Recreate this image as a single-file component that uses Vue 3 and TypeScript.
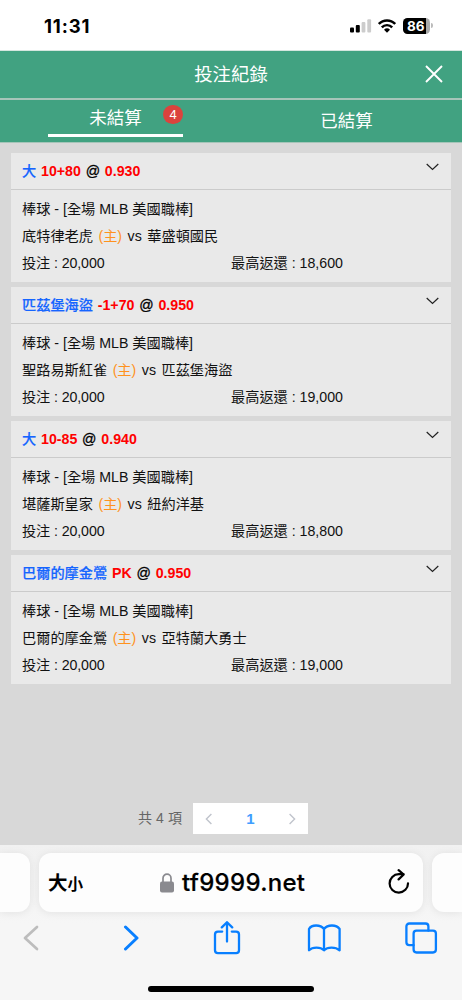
<script setup lang="ts">
import { ref } from 'vue'

interface Bet {
  pick: string
  line: string
  odds: string
  home: string
  away: string
  payout: string
}

const bets: Bet[] = [
  { pick: '大', line: '10+80', odds: '0.930', home: '底特律老虎', away: '華盛頓國民', payout: '18,600' },
  { pick: '匹茲堡海盜', line: '-1+70', odds: '0.950', home: '聖路易斯紅雀', away: '匹茲堡海盜', payout: '19,000' },
  { pick: '大', line: '10-85', odds: '0.940', home: '堪薩斯皇家', away: '紐約洋基', payout: '18,800' },
  { pick: '巴爾的摩金鶯', line: 'PK', odds: '0.950', home: '巴爾的摩金鶯', away: '亞特蘭大勇士', payout: '19,000' },
]
const activeTab = ref<number>(0)
</script>

<template>
  <div class="phone">
    <div class="status">
      <span class="clock">11:31</span>
      <div class="indicators">
        <svg class="signal" width="22" height="14" viewBox="0 0 22 14">
          <rect x="0" y="8.6" width="4" height="5" rx="1" fill="#000" />
          <rect x="5.8" y="6" width="4" height="7.6" rx="1" fill="#000" />
          <rect x="11.6" y="3" width="3.8" height="10.6" rx="1" fill="#ccc" />
          <rect x="17.3" y="0.3" width="3.8" height="13.3" rx="1" fill="#ccc" />
        </svg>
        <svg class="wifi" width="18" height="14" viewBox="0 0 18 14">
          <path d="M0.8 5A11.3 11.3 0 0 1 17.2 5" fill="none" stroke="#000" stroke-width="2.5" />
          <path d="M3.8 8.4A7 7 0 0 1 14.2 8.4" fill="none" stroke="#000" stroke-width="2.4" />
          <path d="M6 10.7A4.3 4.3 0 0 1 12 10.7L9 13.7Z" fill="#000" />
        </svg>
        <div class="battery"><span>86</span></div>
        <i class="battery-cap"></i>
      </div>
    </div>

    <header class="title-bar">
      <h1>投注紀錄</h1>
      <svg class="close" width="18" height="18" viewBox="0 0 18 18">
        <path d="M1 1L17 17M17 1L1 17" stroke="#fff" stroke-width="1.9" />
      </svg>
    </header>

    <nav class="tabs">
      <div class="tab" :class="{ active: activeTab === 0 }" @click="activeTab = 0">
        <span class="tab-label">未結算<b class="count">4</b></span>
      </div>
      <div class="tab" :class="{ active: activeTab === 1 }" @click="activeTab = 1">
        <span class="tab-label">已結算</span>
      </div>
    </nav>

    <main class="list">
      <article v-for="(bet, i) in bets" :key="i" class="card">
        <div class="card-head">
          <span class="pick">{{ bet.pick }}</span>
          <span class="red">{{ bet.line }}</span>
          <span class="at">@</span>
          <span class="red">{{ bet.odds }}</span>
          <svg class="chevron" width="13" height="8" viewBox="0 0 13 8">
            <path d="M0.7 1L6.5 6.5L12.3 1" fill="none" stroke="#222" stroke-width="1.2" />
          </svg>
        </div>
        <div class="card-body">
          <p>棒球 - [全場 MLB 美國職棒]</p>
          <p class="match">
            <span>{{ bet.home }}</span><span class="host">(主)</span><span>vs</span><span>{{ bet.away }}</span>
          </p>
          <p class="money"><span class="stake">投注 : 20,000</span><span>最高返還 : {{ bet.payout }}</span></p>
        </div>
      </article>
    </main>

    <div class="pagination">
      <span class="total">共 4 項</span>
      <div class="pager">
        <svg width="8" height="12" viewBox="0 0 8 12"><path d="M6.4 1L1.4 6L6.4 11" /></svg>
        <b>1</b>
        <svg width="8" height="12" viewBox="0 0 8 12"><path d="M1.6 1L6.6 6L1.6 11" /></svg>
      </div>
    </div>

    <footer class="browser">
      <div class="address-row">
        <div class="side left"></div>
        <div class="address">
          <span class="text-size">大<small>小</small></span>
          <div class="site">
            <svg width="14" height="20" viewBox="0 0 14 20">
              <path d="M3 9V5.2a4 4 0 0 1 8 0V9" fill="none" stroke="#8a8a8f" stroke-width="1.7" />
              <rect x="0" y="8.6" width="14" height="11" rx="2" fill="#8a8a8f" />
            </svg>
            <span class="domain">tf9999.net</span>
          </div>
          <svg class="reload" width="22" height="26" viewBox="0 0 22 26">
            <path d="M20 14.3A9.2 9.2 0 1 1 10.8 5.2H15.6M10.6 1.2L15.7 5.5L10.6 10.4" fill="none" stroke="#000" stroke-width="2.2" stroke-linecap="round" stroke-linejoin="round" />
          </svg>
        </div>
        <div class="side right"></div>
      </div>
      <div class="toolbar">
        <svg width="16" height="26" viewBox="0 0 16 26"><path class="disabled" d="M14 2L2 13L14 24" /></svg>
        <svg width="16" height="26" viewBox="0 0 16 26"><path class="forward" d="M2.5 2L14 13L2.5 24" /></svg>
        <svg width="28" height="34" viewBox="0 0 28 34">
          <path d="M9.2 10.6H4.9A2.9 2.9 0 0 0 2 13.5V29.2A2.9 2.9 0 0 0 4.9 32.1H23.1A2.9 2.9 0 0 0 26 29.2V13.5A2.9 2.9 0 0 0 23.1 10.6H18.8M14 20.5V1.8M8.8 6.4L14 1.2L19.2 6.4" />
        </svg>
        <svg width="34" height="28" viewBox="0 0 34 28">
          <path d="M17 5C13.5 .3 4.5 .3 2 5V26.3C5.5 22.6 13.5 22.6 17 26.3C20.5 22.6 28.5 22.6 32.6 26.3V5C29.5 .3 20.5 .3 17 5ZM17 5V26" />
        </svg>
        <svg width="33" height="32" viewBox="0 0 33 32">
          <path d="M8.6 23.2H4.3A2.9 2.9 0 0 1 1.4 20.3V4.4A2.9 2.9 0 0 1 4.3 1.5H20.5A2.9 2.9 0 0 1 23.4 4.4V8.7" />
          <rect x="8.6" y="8.7" width="22.3" height="21.8" rx="2.9" />
        </svg>
      </div>
      <div class="home-indicator"></div>
    </footer>
  </div>
</template>

<style>
body {
  margin: 0;
}
</style>

<style scoped>
.phone {
  width: 462px;
  height: 1000px;
  overflow: hidden;
  display: flex;
  flex-direction: column;
  background: #d8d8d8;
  color: #111;
  font-family: "Liberation Sans", "Noto Sans CJK TC", sans-serif;
  font-size: 14.2px;
}
svg {
  display: block;
  flex: none;
}
.status {
  box-sizing: border-box;
  height: 51px;
  flex: none;
  display: flex;
  justify-content: space-between;
  padding: 15px 29px 0 44px;
  background: #fff;
  border-bottom: 1px solid #d5e6df;
}
.clock {
  font: 700 18.5px/23px Inter, sans-serif;
  letter-spacing: 0.85px;
  color: #000;
}
.indicators {
  display: flex;
  align-items: flex-start;
  padding-top: 3px;
}
.signal {
  margin-top: 1px;
}
.wifi {
  margin: 1px 0 0 6px;
}
.battery {
  box-sizing: border-box;
  width: 27px;
  height: 16px;
  margin-left: 7px;
  padding-left: 4px;
  border-radius: 4.5px;
  background: linear-gradient(90deg, #000 23px, #aaa 23px);
  color: #fff;
  font: 700 13.5px/16px Inter, sans-serif;
}
.battery-cap {
  width: 2px;
  height: 5px;
  margin: 5px 0 0 1px;
  border-radius: 0 2px 2px 0;
  background: #bbb;
}
.title-bar {
  position: relative;
  flex: none;
  height: 47px;
  display: flex;
  align-items: center;
  justify-content: center;
  background: #41a281;
  color: #fff;
}
.title-bar h1 {
  margin: 0;
  font-size: 18.4px;
  font-weight: 400;
  line-height: 47px;
}
.close {
  position: absolute;
  right: 19px;
  top: 14px;
}
.tabs {
  box-sizing: border-box;
  height: 45px;
  flex: none;
  display: flex;
  border-top: 2px solid #a6c5b9;
  border-bottom: 1px solid #a6c5b9;
  background: #41a281;
  color: #fff;
  font-size: 17.5px;
}
.tab {
  flex: 1;
  display: flex;
  justify-content: center;
  align-items: flex-start;
}
.tab-label {
  position: relative;
  line-height: 43px;
}
.tab.active .tab-label {
  box-sizing: border-box;
  width: 135px;
  height: 37px;
  line-height: 36px;
  text-align: center;
  border-bottom: 3px solid #fff;
}
.count {
  position: absolute;
  right: 0;
  top: 5px;
  width: 20px;
  height: 19px;
  border-radius: 10px;
  background: #db433d;
  font-size: 13px;
  font-weight: 400;
  line-height: 19px;
}
.list {
  flex: none;
  display: flex;
  flex-direction: column;
  gap: 5px;
  padding: 10px 11px 0;
}
.card {
  height: 129px;
  background: #e9e9e9;
}
.card-head {
  box-sizing: border-box;
  height: 37px;
  display: flex;
  gap: 4.8px;
  padding: 0 12px 0 11px;
  border-bottom: 1px solid #cbcbcb;
  font-weight: 700;
  line-height: 36px;
}
.pick {
  color: #1565ff;
  font-weight: 500;
  -webkit-text-stroke: 0.2px #1565ff;
}
.red {
  color: #ff0000;
}
.at {
  color: #000;
  font-weight: 400;
  -webkit-text-stroke: 0.3px #000;
}
.chevron {
  margin: 10px 0 0 auto;
}
.card-body {
  padding: 5px 11px 0;
}
.card-body p {
  margin: 0;
  height: 27px;
  line-height: 28px;
  white-space: nowrap;
}
.match {
  display: flex;
  gap: 5.5px;
}
.host {
  color: #ff921e;
}
.money {
  display: grid;
  grid-template-columns: 209px 1fr;
}
.stake {
  letter-spacing: -0.1px;
}
.pagination {
  flex: none;
  display: flex;
  align-items: center;
  justify-content: flex-end;
  margin-top: 119px;
  padding-right: 154px;
}
.total {
  margin: -3px 11px 0 0;
  color: #666;
  font-size: 14px;
  letter-spacing: 0.1px;
}
.pager {
  box-sizing: border-box;
  width: 115px;
  height: 31px;
  display: flex;
  align-items: center;
  justify-content: space-between;
  padding: 0 12px;
  background: #fff;
}
.pager b {
  margin-top: -1px;
  color: #409eff;
  font-size: 15px;
}
.pager path {
  fill: none;
  stroke: #c0c4cc;
  stroke-width: 1.4;
}
.browser {
  height: 155px;
  flex: none;
  margin-top: auto;
  display: flex;
  flex-direction: column;
  background: linear-gradient(#f1f1f1, #f6f6f6 80px);
}
.address-row {
  display: grid;
  grid-template-columns: 30px 384px 30px;
  gap: 9px;
  height: 59px;
  margin-top: 8px;
}
.side,
.address {
  background: #fdfdfd;
  border-radius: 12px;
  box-shadow: 0 1px 9px rgba(0, 0, 0, 0.08);
}
.left {
  border-radius: 0 12px 12px 0;
}
.right {
  border-radius: 12px 0 0 12px;
}
.address {
  box-sizing: border-box;
  display: flex;
  align-items: center;
  padding: 0 13px 0 9px;
  color: #000;
}
.text-size {
  width: 112px;
  font: 700 19.5px/30px "Noto Sans CJK TC", sans-serif;
}
.text-size small {
  font-size: 15.5px;
}
.site {
  display: flex;
  align-items: center;
  gap: 8px;
}
.domain {
  font: 500 24px/32px Inter, sans-serif;
  letter-spacing: 0.28px;
  -webkit-text-stroke: 0.2px #000;
}
.reload {
  margin: -2px 0 0 auto;
}
.toolbar {
  display: grid;
  grid-template-columns: 100px 90px 94px 98px 57px;
  align-items: center;
  height: 34px;
  margin-top: 9px;
  padding-left: 23px;
}
.toolbar path,
.toolbar rect {
  fill: none;
  stroke: #087fff;
  stroke-width: 2.3;
  stroke-linecap: round;
  stroke-linejoin: round;
}
.toolbar .disabled {
  stroke: #bdbdbd;
  stroke-width: 2.7;
}
.toolbar .forward {
  stroke-width: 3;
}
.home-indicator {
  width: 166px;
  height: 6px;
  margin: 31px auto 0;
  border-radius: 3px;
  background: #000;
}
</style>
